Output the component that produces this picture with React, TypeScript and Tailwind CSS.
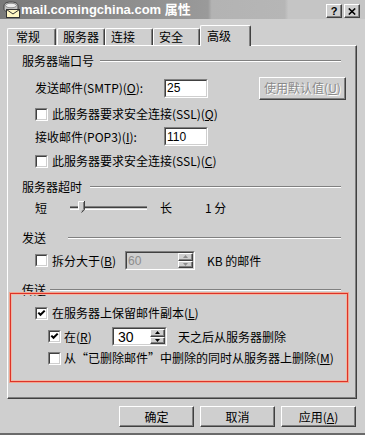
import React from 'react';

// mnemonic letter, underlined like a classic Windows label
const Mn = ({ c }: { c: string }) => <span className="underline underline-offset-[1px]">{c}</span>;

const Btn = ({ className = '', children }: { className?: string; children?: React.ReactNode }) => (
  <div
    className={`flex items-center justify-center shrink-0 border border-t-white border-l-white border-r-[#404040] border-b-[#404040] shadow-[inset_-1px_-1px_0_#808080] bg-[#cfcfcf] ${className}`}
  >
    {children}
  </div>
);

const Field = ({ className = '', children }: { className?: string; children?: React.ReactNode }) => (
  <div className={`shrink-0 border border-t-[#808080] border-l-[#808080] border-r-white border-b-white ${className}`}>
    <div className="w-full h-full flex items-stretch border border-t-[#404040] border-l-[#404040] border-r-[#cfcfcf] border-b-[#cfcfcf]">
      {children}
    </div>
  </div>
);

const Check = ({ checked = false }: { checked?: boolean }) => (
  <div className="w-[13px] h-[13px] shrink-0 border border-t-[#808080] border-l-[#808080] border-r-white border-b-white">
    <div className="w-full h-full bg-white border border-t-[#404040] border-l-[#404040] border-r-[#cfcfcf] border-b-[#cfcfcf] flex items-center justify-center">
      {checked && (
        <svg width="9" height="9" viewBox="0 0 9 9">
          <path d="M1.3 3.6 L3.5 5.8 L7.7 1.6" fill="none" stroke="#000" strokeWidth="2" />
        </svg>
      )}
    </div>
  </div>
);

const Spin = ({ disabled = false }: { disabled?: boolean }) => {
  const c = disabled ? '#8c8c8c' : '#000';
  return (
    <div className="flex flex-col w-[15px] shrink-0">
      <Btn className="h-1/2 w-full">
        <svg width="5" height="3" viewBox="0 0 5 3">
          <path d="M0 3 L2.5 0 L5 3Z" fill={c} />
        </svg>
      </Btn>
      <Btn className="h-1/2 w-full">
        <svg width="5" height="3" viewBox="0 0 5 3">
          <path d="M0 0 L2.5 3 L5 0Z" fill={c} />
        </svg>
      </Btn>
    </div>
  );
};

const Etched = () => <div className="flex-1 h-[2px] border-t border-t-[#808080] border-b border-b-white" />;

const tabs = [
  { label: '常规', cls: 'w-[49px] pl-[8px]' },
  { label: '服务器', cls: 'w-[48px] pl-[5px] ml-[1px]' },
  { label: '连接', cls: 'w-[48px] pl-[5px]' },
  { label: '安全', cls: 'w-[47px] pl-[5px]' },
];

const App: React.FC = () => {
  return (
    <div className="w-[365px] h-[435px] bg-[#cfcfcf] overflow-hidden flex flex-col text-black text-[12px] leading-[14px] font-['Noto_Sans_CJK_SC',sans-serif] border-b-2 border-b-[#6a6a6a]">
      {/* Title bar */}
      <div className="h-[19px] shrink-0 flex items-center bg-[linear-gradient(90deg,#7a7a7a_0%,#9a9a9a_57%,#b3b3b3_58%,#b6b6b6_78%,#c5c5c5_79%)]">
        <svg className="ml-[2px] shrink-0" width="18" height="17" viewBox="0 0 18 17">
          <path d="M2 5 C2 2 5 1 9 1 C13 1 16 2 16 5 L16 8 C16 10 13 11 9 11 C5 11 2 10 2 8 Z" fill="#c4c4c4" stroke="#454545" />
          <ellipse cx="9" cy="4.5" rx="5.5" ry="2.3" fill="#ececec" stroke="#777" strokeWidth="0.8" />
          <rect x="4.5" y="8.5" width="13" height="8" fill="#fff6c2" stroke="#333" />
          <path d="M4.5 8.5 L11 13 L17.5 8.5" fill="none" stroke="#333" />
        </svg>
        <span className="ml-[1px] text-white font-bold text-[13px] font-['Liberation_Sans','Noto_Sans_CJK_SC',sans-serif]">
          mail.comingchina.com 属性
        </span>
        <div className="flex-1" />
        <div className="self-start mt-[4px] mr-[5px] flex gap-[2px]">
          <Btn className="w-[16px] h-[14px]">
            <span className="font-bold text-[11px] leading-[11px] font-['Liberation_Sans',sans-serif]">?</span>
          </Btn>
          <Btn className="w-[16px] h-[14px]">
            <svg width="8" height="7" viewBox="0 0 8 7">
              <path d="M0.8 0.5 L7.2 6.5 M7.2 0.5 L0.8 6.5" stroke="#000" strokeWidth="1.6" />
            </svg>
          </Btn>
        </div>
      </div>

      {/* Tabs */}
      <div className="h-[26px] shrink-0 flex items-end pl-[7px]">
        {tabs.map(t => (
          <div
            key={t.label}
            className={`h-[17px] flex items-center border-l border-t border-white border-r border-r-[#404040] shadow-[inset_-1px_0_0_#808080] rounded-t-[2px] ${t.cls}`}
          >
            {t.label}
          </div>
        ))}
        <div className="relative z-10 w-[51px] h-[21px] -mb-[1px] pl-[6px] flex items-center bg-[#cfcfcf] border-l border-t border-white border-r border-r-[#404040] shadow-[inset_-1px_0_0_#808080] rounded-t-[2px]">
          高级
        </div>
      </div>

      {/* Tab panel */}
      <div className="relative shrink-0 ml-[7px] w-[350px] h-[354px] border-l border-t border-white border-r border-b border-r-[#404040] border-b-[#404040] shadow-[inset_-1px_-1px_0_#808080] pl-[14px] pr-[15px] flex flex-col">
        {/* 服务器端口号 */}
        <div className="h-[14px] mt-[8px] flex items-center">
          <span className="w-[78px] shrink-0">服务器端口号</span>
          <Etched />
        </div>
        <div className="h-[24px] mt-[8px] flex items-center pl-[13px]">
          <span className="w-[129px] shrink-0">
            发送邮件(SMTP)(<Mn c="O" />):
          </span>
          <Field className="w-[44px] h-[19px] bg-white">
            <span className="flex items-center pl-[1px] font-['Liberation_Sans',sans-serif]">25</span>
          </Field>
          <Btn className="ml-[51px] w-[87px] h-[23px] text-[#8a8a8a] [text-shadow:1px_1px_0_#fff]">
            使用默认值(<Mn c="U" />)
          </Btn>
        </div>
        <div className="h-[14px] mt-[7px] flex items-center pl-[13px] gap-[4px]">
          <Check />
          <span>
            此服务器要求安全连接(SSL)(<Mn c="Q" />)
          </span>
        </div>
        <div className="h-[19px] mt-[6px] flex items-center pl-[13px]">
          <span className="w-[129px] shrink-0">
            接收邮件(POP3)(<Mn c="I" />):
          </span>
          <Field className="w-[44px] h-[19px] bg-white">
            <span className="flex items-center pl-[1px] font-['Liberation_Sans',sans-serif]">110</span>
          </Field>
        </div>
        <div className="h-[14px] mt-[8px] flex items-center pl-[13px] gap-[4px]">
          <Check />
          <span>
            此服务器要求安全连接(SSL)(<Mn c="C" />)
          </span>
        </div>

        {/* 服务器超时 */}
        <div className="h-[14px] mt-[12px] flex items-center">
          <span className="w-[68px] shrink-0">服务器超时</span>
          <Etched />
        </div>
        <div className="h-[16px] mt-[6px] flex items-center pl-[13px]">
          <span className="w-[35px] shrink-0">短</span>
          <div className="relative w-[77px] h-[4px] shrink-0 border-t border-t-[#808080] border-b border-b-white shadow-[inset_0_1px_0_#404040]">
            <svg className="absolute left-[8px] -top-[6px]" width="7" height="12" viewBox="0 0 7 12">
              <path d="M0 0 H7 V8.5 L3.5 12 L0 8.5Z" fill="#cfcfcf" />
              <path d="M0.5 9 V0.5 H6" fill="none" stroke="#fff" />
              <path d="M6.5 0 V8.7 L3.5 11.5" fill="none" stroke="#404040" />
              <path d="M5.5 1 V8.3 L3.5 10.3" fill="none" stroke="#808080" />
            </svg>
          </div>
          <span className="ml-[13px] w-[12px] shrink-0">长</span>
          <span className="ml-[33px]">1 分</span>
        </div>

        {/* 发送 */}
        <div className="h-[14px] mt-[15px] flex items-center">
          <span className="w-[46px] shrink-0">发送</span>
          <Etched />
        </div>
        <div className="h-[19px] mt-[6px] flex items-center pl-[13px]">
          <Check />
          <span className="ml-[4px] w-[73px] shrink-0">
            拆分大于(<Mn c="B" />)
          </span>
          <Field className="w-[70px] h-[19px] bg-[#cfcfcf]">
            <span className="flex-1 flex items-center pl-[1px] text-[#8c8c8c] font-['Liberation_Sans',sans-serif]">60</span>
            <Spin disabled />
          </Field>
          <span className="ml-[12px]">KB 的邮件</span>
        </div>

        {/* 传送 */}
        <div className="h-[14px] mt-[13px] flex items-center">
          <span className="w-[28px] shrink-0">传送</span>
          <Etched />
        </div>
        <div className="h-[14px] mt-[9px] flex items-center pl-[13px] gap-[4px]">
          <Check checked />
          <span>
            在服务器上保留邮件副本(<Mn c="L" />)
          </span>
        </div>
        <div className="h-[19px] mt-[7px] flex items-center pl-[26px]">
          <Check checked />
          <span className="ml-[3px] w-[48px] shrink-0">
            在(<Mn c="R" />)
          </span>
          <Field className="w-[55px] h-[19px] bg-white">
            <span className="flex-1 flex items-center pl-[4px] text-[14px] font-['Liberation_Sans',sans-serif]">30</span>
            <Spin />
          </Field>
          <span className="ml-[11px]">天之后从服务器删除</span>
        </div>
        <div className="h-[14px] mt-[5px] flex items-center pl-[26px]">
          <Check />
          <span className="ml-[3px] whitespace-nowrap">
            从“已删除邮件”中删除的同时从服务器上删除(<Mn c="M" />)
          </span>
        </div>

        {/* red highlight drawn over the 传送 group */}
        <div className="absolute left-[2px] top-[247px] w-[338px] h-[89px] border border-[#dc3328] shadow-[0_0_0_1px_#f3a48e,inset_0_0_0_1px_#f0b6a4] pointer-events-none" />
      </div>

      {/* Dialog buttons */}
      <div className="mt-[7px] flex justify-end gap-[6px] pr-[9px]">
        <Btn className="w-[75px] h-[21px]">确定</Btn>
        <Btn className="w-[75px] h-[21px]">取消</Btn>
        <Btn className="w-[75px] h-[21px]">
          应用(<Mn c="A" />)
        </Btn>
      </div>
    </div>
  );
};

export default App;
